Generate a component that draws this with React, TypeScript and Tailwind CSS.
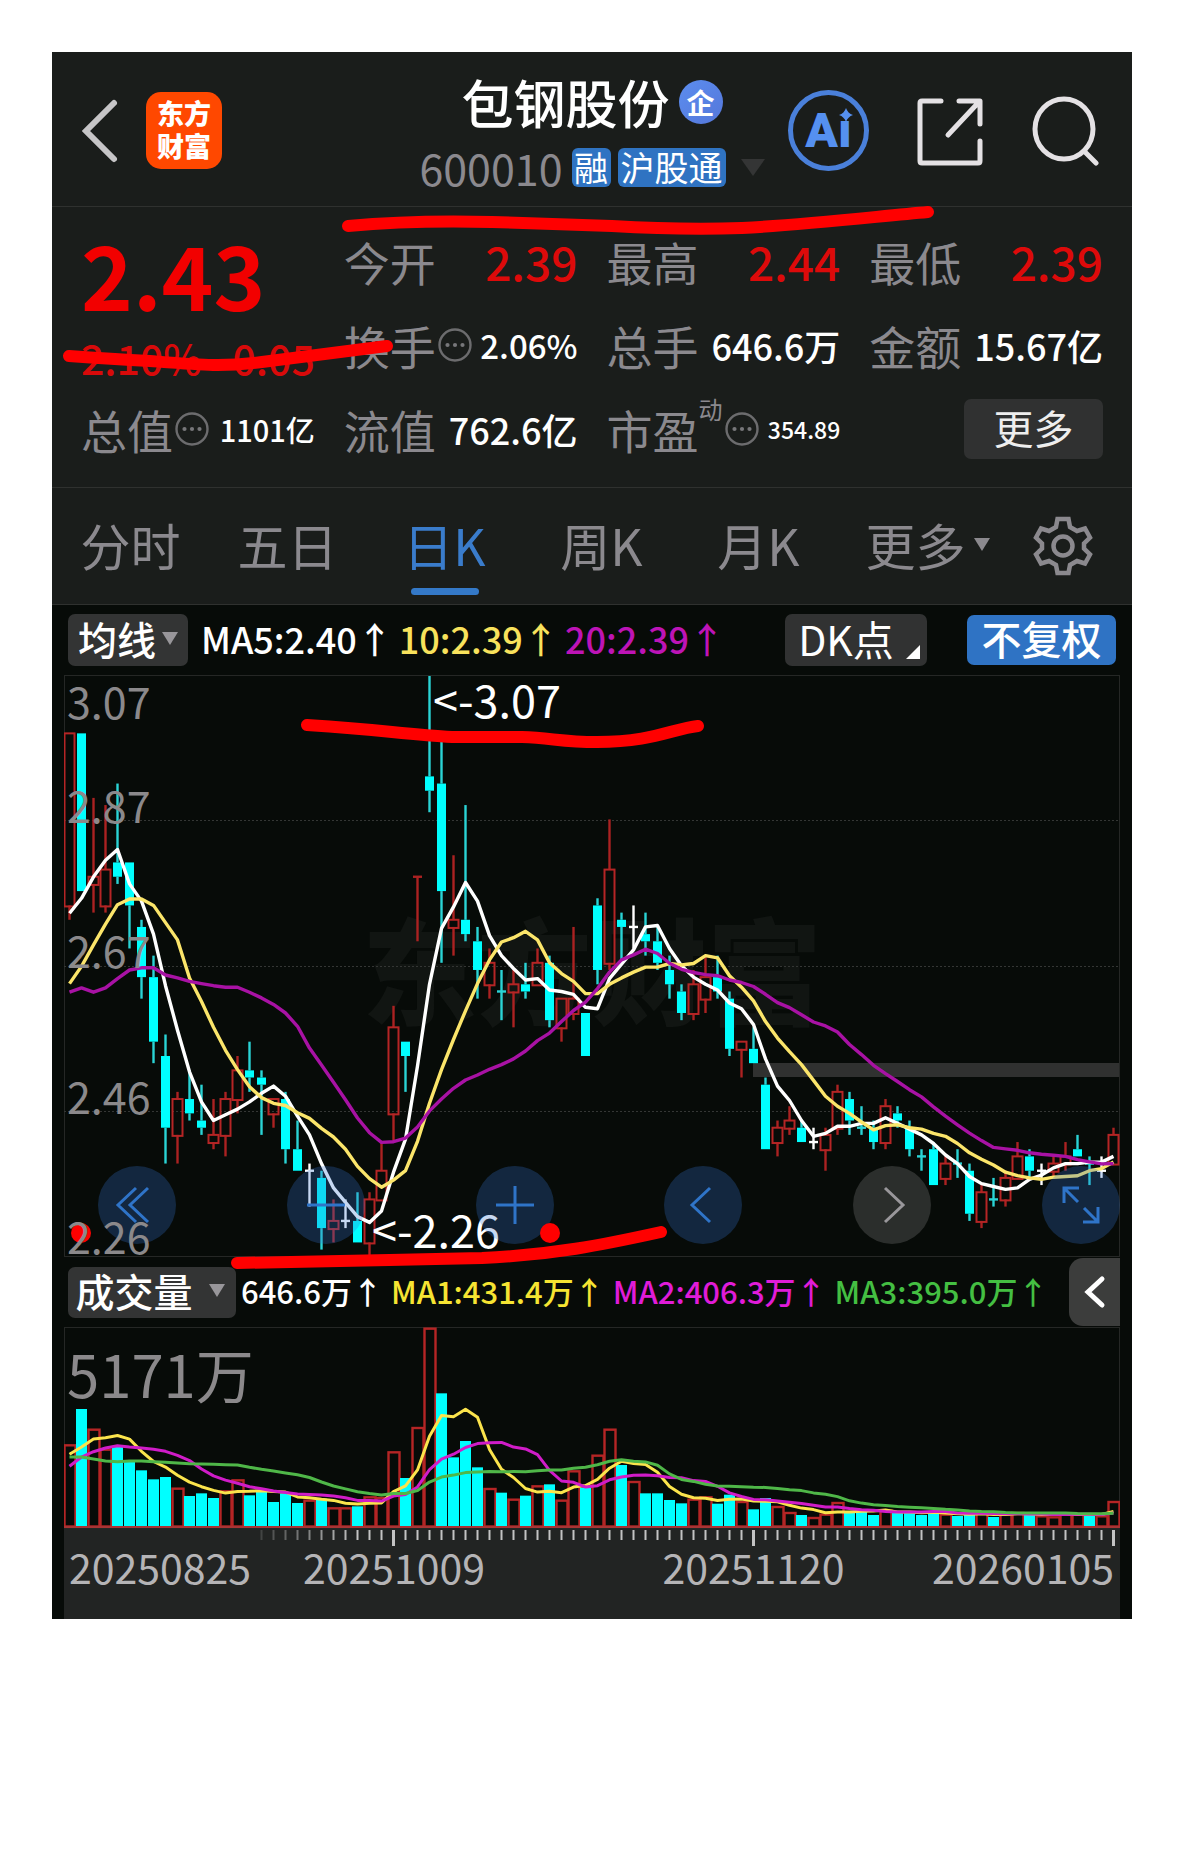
import React from "react";

type Kind = "r" | "c" | "w";
// [kind, high, body top, body bottom, low] in cents below the top price of 3.07
type Candle = [Kind, number, number, number, number];

const CANDLES: Candle[] = [
  ["r", 8, 8, 32, 34], ["c", 8, 8, 30, 30], ["r", 17, 28, 29, 33], ["r", 18, 27, 32, 33],
  ["c", 15, 26, 28, 29], ["c", 26, 26, 32, 38], ["c", 34, 35, 42, 45], ["c", 39, 42, 51, 54],
  ["c", 50, 53, 63, 68], ["r", 58, 59, 64, 68], ["c", 55, 59, 61, 62], ["c", 57, 62, 63, 64],
  ["r", 59, 64, 65, 66], ["r", 58, 59, 64, 67], ["r", 53, 55, 59, 61], ["c", 51, 55, 56, 58],
  ["c", 55, 56, 57, 64], ["r", 59, 59, 61, 63], ["c", 58, 59, 66, 68], ["c", 62, 66, 69, 69],
  ["w", 68, 69, 69, 74], ["c", 69, 70, 77, 80], ["r", 73, 76, 77, 79], ["w", 73, 76, 76, 77],
  ["c", 72, 76, 79, 79], ["r", 72, 73, 79, 81], ["r", 65, 69, 73, 73], ["r", 46, 49, 61, 65],
  ["c", 51, 51, 53, 58], ["r", 28, 28, 28, 37], ["c", 0, 14, 16, 19], ["c", 9, 15, 30, 40],
  ["r", 25, 34, 35, 39], ["c", 18, 34, 36, 37], ["c", 35, 37, 41, 45], ["r", 38, 40, 43, 45],
  ["c", 41, 44, 44, 48], ["r", 41, 43, 44, 49], ["c", 40, 43, 44, 45], ["r", 38, 40, 43, 43],
  ["c", 39, 40, 48, 49], ["r", 45, 45, 49, 51], ["r", 35, 45, 47, 48], ["c", 47, 47, 53, 53],
  ["c", 31, 32, 41, 43], ["r", 20, 27, 40, 41], ["c", 33, 34, 35, 40], ["w", 32, 35, 35, 38],
  ["c", 33, 36, 37, 39], ["c", 35, 37, 40, 41], ["c", 39, 41, 43, 45], ["c", 43, 44, 47, 48],
  ["r", 41, 43, 47, 48], ["r", 39, 42, 45, 47], ["c", 39, 42, 44, 45], ["c", 44, 45, 52, 53],
  ["r", 51, 51, 52, 56], ["c", 49, 52, 54, 54], ["c", 56, 57, 66, 66], ["r", 62, 63, 65, 67],
  ["r", 60, 62, 63, 64], ["c", 62, 63, 65, 65], ["w", 63, 65, 65, 66], ["r", 63, 64, 66, 69],
  ["r", 57, 58, 63, 64], ["c", 58, 59, 62, 64], ["c", 60, 63, 63, 64], ["c", 62, 63, 65, 66],
  ["r", 59, 60, 65, 66], ["c", 60, 61, 62, 63], ["c", 62, 63, 66, 67], ["c", 66, 67, 67, 69],
  ["c", 65, 66, 71, 71], ["r", 67, 68, 70, 71], ["c", 66, 68, 68, 70], ["c", 68, 69, 75, 76],
  ["r", 71, 72, 76, 77], ["c", 70, 73, 73, 74], ["r", 69, 70, 73, 74], ["r", 65, 67, 70, 70],
  ["c", 66, 67, 69, 70], ["w", 68, 69, 69, 71], ["r", 67, 68, 69, 70], ["r", 65, 67, 68, 69],
  ["c", 64, 66, 67, 67], ["c", 67, 68, 68, 71], ["w", 67, 69, 69, 70], ["r", 63, 64, 68, 68],
];

// Volume bars, measured as a depth of 0..600 from the top of the pane
const VOLUME: number[] = [
  402, 296, 355, 415, 410, 455, 480, 507, 500, 532, 557, 549, 563, 540, 507, 555, 541, 575, 549, 578,
  568, 565, 591, 591, 588, 558, 560, 423, 503, 350, 52, 249, 441, 392, 471, 533, 547, 565, 556, 525,
  522, 568, 480, 532, 433, 355, 464, 512, 549, 549, 569, 579, 565, 558, 580, 553, 572, 597, 563, 587,
  605, 614, 620, 610, 575, 605, 604, 614, 598, 606, 605, 614, 606, 610, 617, 611, 606, 620, 610, 605,
  611, 615, 618, 610, 610, 610, 615, 572,
];
const VOLUME_KINDS =
  "rcrrccccc" + "rccc" + "rrccccc" + "rcrrcrrrcrrccccrcrcrcrrcrrcrccccrrccrccrrcrrrcccrccccrccrcrrcrrrrcrr";

function average(values: number[], span: number, lead: number[]): number[] {
  return values.map((_, i) => {
    if (i < span - 1) return lead[i];
    let sum = 0;
    for (let k = i - span + 1; k <= i; k++) sum += values[k];
    return sum / span;
  });
}

const CLOSES = CANDLES.map(([kind, , top, bottom]) => (kind === "c" ? bottom : top));
const MA5 = average(CLOSES, 5, [33.1, 31, 28, 25.7]);
const MA10 = average(CLOSES, 10, [42.9, 40.5, 37.5, 34.6, 31.9, 31.1, 31.1, 32, 34.4]);
const MA20 = average(CLOSES, 20, [
  44.1, 43.5, 44.1, 43.5, 42.2, 41, 40.7, 40.7, 41.7, 42.1, 42.6, 42.9, 43.2, 43.4, 43.4, 44.1, 44.9, 45.8, 47,
]);
const VMA5 = average(VOLUME, 5, [432, 410, 386, 382]);
const VMA10 = average(VOLUME, 10, [468, 440, 424, 413, 406, 410, 413, 417, 423]);
const VMA20 = average(VOLUME, 20, [
  440, 440, 446, 452, 454, 452, 452, 454, 456, 458, 460, 461, 462, 463, 464, 471, 477, 482, 488,
]);

const xAt = (i: number) => 5.5 + 12 * i;
const yPrice = (c: number) => 1 + c * 7.17;
const yVol = (v: number) => (v - 50) / 3;
const line = (values: number[], y: (v: number) => number) =>
  values.map((v, i) => `${xAt(i)},${y(v).toFixed(1)}`).join(" ");

const WICK = { r: "#ab2222", c: "#2ad4d6", w: "#ffffff" };

function PriceChart() {
  return (
    <svg className="absolute inset-0 h-full w-full" viewBox="0 0 1056 582" preserveAspectRatio="none" aria-hidden="true">
      {[145.5, 291.5, 436.5].map((y) => (
        <line key={y} x1="0" x2="1056" y1={y} y2={y} stroke="#343634" strokeDasharray="2 2" />
      ))}
      <rect x="689" y="388" width="366" height="14" fill="#303130" />
      {CANDLES.map(([kind, high, top, bottom, low], i) => {
        const x = xAt(i);
        const yt = yPrice(top);
        const yb = yPrice(bottom);
        return (
          <g key={i}>
            <line x1={x} x2={x} y1={yPrice(high)} y2={yt} stroke={WICK[kind]} strokeWidth="2.4" />
            <line x1={x} x2={x} y1={yb} y2={yPrice(low)} stroke={WICK[kind]} strokeWidth="2.4" />
            {top === bottom ? (
              <line x1={x - 4.5} x2={x + 4.5} y1={yt} y2={yt} stroke={WICK[kind]} strokeWidth="2.4" />
            ) : kind === "c" ? (
              <rect x={x - 4.5} y={yt} width="9" height={yb - yt} fill="#00ffff" />
            ) : (
              <rect x={x - 5} y={yt} width="10" height={yb - yt + 1} fill="none" stroke="#b52525" strokeWidth="2" />
            )}
          </g>
        );
      })}
      <g fill="none" strokeWidth="3.4" strokeLinejoin="round">
        <polyline points={line(MA5, yPrice)} stroke="#ffffff" />
        <polyline points={line(MA10, yPrice)} stroke="#fbe56a" />
        <polyline points={line(MA20, yPrice)} stroke="#a812a4" />
      </g>
    </svg>
  );
}

function VolumeChart() {
  return (
    <svg className="absolute inset-0 h-full w-full" viewBox="0 0 1056 202" preserveAspectRatio="none" aria-hidden="true">
      {VOLUME.map((v, i) =>
        VOLUME_KINDS[i] === "c" ? (
          <rect key={i} x={xAt(i) - 5.5} y={yVol(v)} width="11" height={199.5 - yVol(v)} fill="#00ffff" />
        ) : (
          <rect
            key={i}
            x={xAt(i) - 5}
            y={yVol(v) + 1}
            width="11"
            height={198.5 - yVol(v)}
            fill="none"
            stroke="#b52525"
            strokeWidth="2.4"
          />
        ),
      )}
      <line x1="0" x2="1056" y1="200" y2="200" stroke="#a83434" strokeWidth="2" />
      <g fill="none" strokeWidth="3" strokeLinejoin="round">
        <polyline points={line(VMA5, yVol)} stroke="#fbe44c" />
        <polyline points={line(VMA10, yVol)} stroke="#d01cc8" />
        <polyline points={line(VMA20, yVol)} stroke="#4fb748" />
      </g>
    </svg>
  );
}

function AxisTicks() {
  return (
    <svg className="absolute inset-x-0 top-0 h-[18px] w-full" viewBox="0 0 1056 18" preserveAspectRatio="none" aria-hidden="true">
      {CANDLES.map((_, i) => {
        if (i < 16) return null;
        const major = i === 27 || i === 57 || i === 87;
        return (
          <line
            key={i}
            x1={xAt(i)}
            x2={xAt(i)}
            y1="1"
            y2={major ? 17 : 11}
            stroke="#c4c4c4"
            strokeWidth={major ? 3 : 2}
            opacity={Math.min(1, 0.2 + (i - 16) * 0.1)}
          />
        );
      })}
    </svg>
  );
}

function Down({ className }: { className: string }) {
  return (
    <svg className={className} viewBox="0 0 16 13" preserveAspectRatio="none" aria-hidden="true">
      <path d="M0 0h16L8 13z" fill="currentColor" />
    </svg>
  );
}

function InfoDot() {
  return (
    <svg className="ml-0.5 h-[34px] w-[34px] shrink-0" viewBox="0 0 34 34" fill="#77777a" aria-hidden="true">
      <circle cx="17" cy="17" r="15.5" fill="none" stroke="#6c6c6e" strokeWidth="2.4" />
      <circle cx="9.5" cy="17" r="2.1" />
      <circle cx="17" cy="17" r="2.1" />
      <circle cx="24.5" cy="17" r="2.1" />
    </svg>
  );
}

function Stat({
  label,
  value,
  size = "text-[36px]",
  color = "text-white",
  info = false,
  sup,
}: {
  label: string;
  value: string;
  size?: string;
  color?: string;
  info?: boolean;
  sup?: string;
}) {
  return (
    <div className="flex h-[84px] items-center justify-between whitespace-nowrap leading-none">
      <dt className="flex items-center text-[46px] text-[#8b898e]">
        {label}
        {sup && <sup className="relative -top-5 text-[24px] leading-none">{sup}</sup>}
        {info && <InfoDot />}
      </dt>
      <dd className={`${size} ${color} font-medium`}>{value}</dd>
    </div>
  );
}

function RoundButton({ label, gray = false, children }: { label: string; gray?: boolean; children: React.ReactNode }) {
  return (
    <button
      type="button"
      aria-label={label}
      className={`flex h-[78px] w-[78px] items-center justify-center rounded-full ${
        gray ? "bg-[#969696]/25 text-[#99979b]" : "bg-[#3273d2]/28 text-[#2f74c8]"
      }`}
    >
      <svg className="h-[78px] w-[78px]" viewBox="0 0 78 78" fill="none" stroke="currentColor" strokeWidth="3" aria-hidden="true">
        {children}
      </svg>
    </button>
  );
}

const TABS = ["分时", "五日", "日K", "周K", "月K"];

export default function App() {
  return (
    <div className="bg-white p-[52px] font-['Noto_Sans_CJK_SC',sans-serif]">
      <main className="relative bg-[#1a1d1b]">
        <header className="grid h-[155px] grid-cols-[1fr_auto_1fr] items-center border-b border-[#2f312f]">
          <div className="flex items-center gap-6 pt-[3px] pl-[28px]">
            <button type="button" aria-label="返回" className="text-[#c6c5c7]">
              <svg className="h-[66px] w-[42px]" viewBox="0 0 42 66" fill="none" stroke="currentColor" strokeWidth="6" strokeLinecap="round" aria-hidden="true">
                <path d="M34 5 6 33l28 28" />
              </svg>
            </button>
            <a href="#home" className="flex h-[77px] w-[76px] flex-col items-center justify-center rounded-[15px] bg-[#ff4800] pb-1 text-[27px] leading-[33px] font-black text-white">
              <span>东方</span>
              <span>财富</span>
            </a>
          </div>
          <div className="flex flex-col items-center gap-4">
            <div className="flex h-[60px] items-center gap-[9px]">
              <h1 className="text-[52px] leading-[52px] font-medium text-white">包钢股份</h1>
              <span className="flex h-[44px] w-[44px] items-center justify-center rounded-full bg-linear-to-br from-[#5b8def] to-[#5577da] text-[28px] leading-[28px] font-bold text-white">
                企
              </span>
            </div>
            <div className="flex h-[39px] items-center gap-[7px] leading-none">
              <span className="pr-0.5 text-[43px] text-[#8b898e]">600010</span>
              <span className="flex h-[39px] w-[39px] items-center justify-center rounded-md bg-[#2f73c2] text-[34px] text-white">融</span>
              <span className="flex h-[39px] items-center rounded-md bg-[#2f73c2] px-[3px] text-[34px] text-white">沪股通</span>
              <Down className="ml-2 h-[17px] w-[24px] text-[#343535]" />
            </div>
          </div>
          <div className="flex items-center justify-end gap-[48px] pt-[3px] pr-[33px]">
            <button type="button" aria-label="Ai" className="relative flex h-[81px] w-[81px] items-center justify-center rounded-full border-[5px] border-[#4a80da] font-['Roboto'] text-[48px] leading-[48px] font-black text-[#5590f0]">
              Aı
              <svg className="absolute top-[13px] left-[46px] h-[14px] w-[14px]" viewBox="0 0 12 12" fill="currentColor" aria-hidden="true">
                <path d="M6 0Q7.500 4.500 12 6 7.500 7.500 6 12 4.500 7.500 0 6 4.500 4.500 6 0z" />
              </svg>
            </button>
            <button type="button" aria-label="分享" className="text-[#e4e1e4]">
              <svg className="h-[70px] w-[66px]" viewBox="0 0 66 70" fill="none" stroke="currentColor" strokeWidth="5" strokeLinecap="round" strokeLinejoin="round" aria-hidden="true">
                <path d="M24 5H5q-2 0-2 2v58q0 2 2 2h56q2 0 2-2V45M42 5h21v23M61 7 31 39" />
              </svg>
            </button>
            <button type="button" aria-label="搜索" className="text-[#e4e1e4]">
              <svg className="h-[70px] w-[68px]" viewBox="0 0 68 70" fill="none" stroke="currentColor" strokeWidth="5" strokeLinecap="round" aria-hidden="true">
                <ellipse cx="33" cy="33" rx="29" ry="30" />
                <path d="m53 55 12 12" />
              </svg>
            </button>
          </div>
        </header>

        <section className="grid h-[281px] grid-cols-4 gap-x-[29px] border-b border-[#2f312f] px-[29px] pt-[12px]">
          <div>
            <p className="flex h-[108px] items-center text-[88px] leading-none font-bold text-[#f20000]">2.43</p>
            <p className="flex h-[60px] items-center justify-between text-[41px] leading-none font-medium text-[#d80a0a]">
              <span>2.10%</span>
              <span>0.05</span>
            </p>
            <dl>
              <Stat label="总值" value="1101亿" size="text-[29px]" info />
            </dl>
          </div>
          <dl className="col-span-3 grid grid-cols-3 content-start gap-x-[29px]">
            <Stat label="今开" value="2.39" size="text-[46px]" color="text-[#dd0a0a]" />
            <Stat label="最高" value="2.44" size="text-[46px]" color="text-[#dd0a0a]" />
            <Stat label="最低" value="2.39" size="text-[46px]" color="text-[#dd0a0a]" />
            <Stat label="换手" value="2.06%" size="text-[33px]" info />
            <Stat label="总手" value="646.6万" />
            <Stat label="金额" value="15.67亿" />
            <Stat label="流值" value="762.6亿" />
            <Stat label="市盈" value="354.89" size="text-[23px]" sup="动" info />
            <div className="flex h-[84px] items-center justify-end">
              <button type="button" className="h-[60px] w-[139px] rounded-[7px] bg-[#303131] pb-1 text-[40px] leading-none text-[#eeeeee]">
                更多
              </button>
            </div>
          </dl>
        </section>

        <nav className="grid h-[117px] grid-cols-[repeat(6,157fr)_138fr] border-b border-[#2f312f] text-[50px] leading-none text-[#8b898e]">
          {TABS.map((tab) => (
            <button
              key={tab}
              type="button"
              className={
                tab === "日K"
                  ? "relative flex items-center justify-center pb-1 text-[#3a7ccb]"
                  : "flex items-center justify-center pb-1"
              }
            >
              {tab}
              {tab === "日K" && <span className="absolute bottom-[9px] h-[7px] w-[68px] rounded-full bg-[#3479c8]" />}
            </button>
          ))}
          <button type="button" className="flex items-center justify-center gap-2 pb-1 pl-[24px] whitespace-nowrap">
            更多
            <Down className="h-[13px] w-[16px] shrink-0" />
          </button>
          <button type="button" aria-label="设置" className="flex items-center justify-center">
            <svg className="h-[60px] w-[60px]" viewBox="0 0 60 60" fill="none" stroke="currentColor" strokeWidth="4.5" aria-hidden="true">
              <path d="M24.500 3h11l1.500 8 7 4 8-2.500 5 9-6 6v5l6 6-5 9-8-2.500-7 4-1.500 8h-11l-1.500-8-7-4-8 2.500-5-9 6-6v-5l-6-6 5-9 8 2.500 7-4z" />
              <circle cx="30" cy="30" r="9.500" />
            </svg>
          </button>
        </nav>

        <section className="bg-[#070b08]">
          <div className="flex h-[70px] items-center pr-[16px] pl-[16px] leading-none whitespace-nowrap">
            <button type="button" className="flex h-[52px] w-[120px] items-center justify-center gap-1.5 rounded-[7px] bg-[#333434] pb-1 text-[39px] font-medium text-white">
              均线
              <Down className="h-[13px] w-[16px] shrink-0 text-[#98969a]" />
            </button>
            <p className="ml-[13px] flex gap-1.5 pb-1 text-[36px] font-medium">
              <span className="text-white">MA5:2.40↑</span>
              <span className="text-[#f8e25c]">10:2.39↑</span>
              <span className="text-[#bd14b6]">20:2.39↑</span>
            </p>
            <button type="button" className="relative ml-auto h-[52px] w-[142px] rounded-[7px] bg-[#313232] pr-5 pb-1 text-[41px] text-white">
              DK点
              <svg className="absolute right-[7px] bottom-[7px] h-[14px] w-[14px]" viewBox="0 0 14 14" aria-hidden="true">
                <path d="M14 0v14H0z" fill="#ffffff" />
              </svg>
            </button>
            <button type="button" className="ml-[40px] h-[50px] w-[149px] rounded-[7px] bg-[#2f73c4] pb-1 text-[40px] font-medium text-white">不复权</button>
          </div>

          <div className="relative mx-3 h-[582px] text-[43px] leading-none ring-1 ring-[#252725] ring-inset">
            <span className="absolute inset-0 flex items-center justify-center text-[115px] leading-none font-black text-[#111512]">东方财富</span>
            <PriceChart />
            <span className="absolute top-[1px] left-[369px] text-[45px] leading-none text-white">&lt;-3.07</span>
            <span className="absolute bottom-[6px] left-[308px] text-[45px] leading-none text-white">&lt;-2.26</span>
            <span className="absolute top-[4px] left-[3px] text-[#8b898b]">3.07</span>
            <span className="absolute top-[18.5%] left-[3px] text-[#8b898b]">2.87</span>
            <span className="absolute top-[43.5%] left-[3px] text-[#8b898b]">2.67</span>
            <span className="absolute top-[68.5%] left-[3px] text-[#8b898b]">2.46</span>
            <div className="absolute right-0 bottom-[13px] left-[34px] flex justify-between">
              <RoundButton label="最左">
                <path d="M38 22 20 39l18 17M50 22 32 39l18 17" />
              </RoundButton>
              <RoundButton label="缩小">
                <path d="M20 39h38" />
              </RoundButton>
              <RoundButton label="放大">
                <path d="M20 39h38M39 20v38" />
              </RoundButton>
              <RoundButton label="左移">
                <path d="M46 22 28 39l18 17" />
              </RoundButton>
              <RoundButton label="右移" gray>
                <path d="m32 22 18 17-18 17" />
              </RoundButton>
              <RoundButton label="全屏">
                <path d="M36 36 22 22M22 37V22h15M42 42l14 14M56 41v15H41" />
              </RoundButton>
            </div>
            <span className="absolute bottom-[14px] left-[7px] h-5 w-5 rounded-full bg-[#ff0000]" />
            <span className="absolute bottom-[14px] left-[476px] h-5 w-5 rounded-full bg-[#ff0000]" />
            <span className="absolute bottom-0 left-[3px] text-[#8b898b]">2.26</span>
          </div>

          <div className="flex h-[70px] items-center pr-3 pl-[16px] leading-none whitespace-nowrap">
            <button type="button" className="flex h-[51px] w-[168px] items-center justify-center gap-4 rounded-[7px] bg-[#333434] pr-1 pb-1 text-[39px] font-medium text-white">
              成交量
              <Down className="h-[13px] w-[16px] shrink-0 text-[#98969a]" />
            </button>
            <p className="ml-[5px] flex gap-2 pb-1 text-[31px] font-medium">
              <span className="text-white">646.6万↑</span>
              <span className="text-[#f6e432]">MA1:431.4万↑</span>
              <span className="text-[#e01cd8]">MA2:406.3万↑</span>
              <span className="text-[#44bf42]">MA3:395.0万↑</span>
            </p>
            <button type="button" aria-label="展开" className="ml-auto flex h-[68px] w-[51px] items-center justify-center rounded-l-[14px] bg-[#3c3d3c]">
              <svg className="h-[34px] w-[22px]" viewBox="0 0 22 34" fill="none" stroke="#ffffff" strokeWidth="5" strokeLinecap="round" aria-hidden="true">
                <path d="M18 4 4 17l14 13" />
              </svg>
            </button>
          </div>

          <div className="relative mx-3 h-[202px] ring-1 ring-[#252725] ring-inset">
            <VolumeChart />
            <span className="absolute top-[17px] left-[3px] text-[58px] leading-none text-[#8b898b]">5171万</span>
          </div>

          <div className="relative mx-3 h-[90px] bg-[#222423] text-[41px] leading-none text-[#b5b4b6]">
            <AxisTicks />
            <span className="absolute top-[17px] left-[5px]">20250825</span>
            <span className="absolute top-[17px] left-[31.25%] -translate-x-1/2">20251009</span>
            <span className="absolute top-[17px] left-[65.3%] -translate-x-1/2">20251120</span>
            <span className="absolute top-[17px] right-[6px]">20260105</span>
          </div>
        </section>

        <svg
          className="pointer-events-none absolute inset-0 h-full w-full"
          viewBox="0 0 1080 1567"
          preserveAspectRatio="none"
          fill="none"
          stroke="#ff0000"
          strokeWidth="12"
          strokeLinecap="round"
          strokeLinejoin="round"
          aria-hidden="true"
        >
          <path d="M296 174C350 169 400 169 440 170L560 174Q630 178 690 176C750 173 820 165 876 160" />
          <path d="M17 304Q60 307 98 309C150 313 170 315 210 310S290 300 335 294" />
          <path d="M255 673Q300 676 340 680T400 685H470C500 686 510 690 545 690C600 690 620 677 646 674" />
          <path d="M185 1211C250 1209 350 1208 430 1206C500 1203 550 1193 609 1180" />
        </svg>
      </main>
    </div>
  );
}
